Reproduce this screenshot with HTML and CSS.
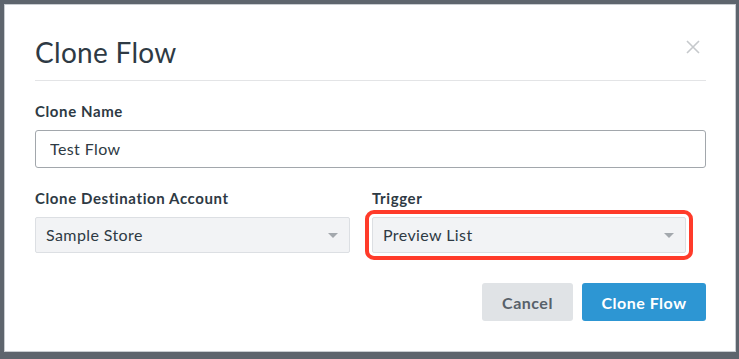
FILE: index.html
```html
<!DOCTYPE html>
<html lang="en">
<head>
    <meta charset="UTF-8">
    <meta name="viewport" content="width=device-width, initial-scale=1.0">
    <title>Clone Flow</title>
    <link rel="stylesheet" href="styles.css">
</head>
<body>

<div class="modal">
    <div class="modal-header">
        <h1>Clone Flow</h1>
        <button class="close-button" aria-label="Close">
            <svg width="14" height="14" viewBox="0 0 14 14">
                <path d="M1 1 L13 13 M13 1 L1 13" stroke="#c6c9cc" stroke-width="1.6" fill="none"/>
            </svg>
        </button>
    </div>

    <div class="input-group">
        <label for="clone_name">Clone Name</label>
        <input type="text" id="clone_name" name="clone_name" value="Test Flow">
    </div>

    <div class="row">
        <div class="input-group">
            <label for="account">Clone Destination Account</label>
            <div class="select-wrap">
                <select id="account" name="account">
                    <option>Sample Store</option>
                </select>
            </div>
        </div>
        <div class="input-group">
            <label for="trigger">Trigger</label>
            <div class="select-wrap highlight">
                <select id="trigger" name="trigger">
                    <option>Preview List</option>
                </select>
            </div>
        </div>
    </div>

    <div class="actions">
        <button class="cancel-button">Cancel</button>
        <button class="primary-button">Clone Flow</button>
    </div>
</div>

</body>
</html>
```

FILE: styles.css
```css
body {
    font-family: Lato, "Open Sans", sans-serif;
    margin: 0;
    padding: 4px;
    background-color: #5e656d;
    color: #2e3a44;
}
.modal {
    width: 730px;
    height: 346px;
    box-sizing: content-box;
    background-color: #fff;
    border: 1px solid #c9cdd1;
    padding: 0;
}
.modal-header {
    display: flex;
    justify-content: space-between;
    align-items: flex-start;
    margin: 0 29px 0 30px;
    padding-top: 30px;
    padding-bottom: 11px;
    border-bottom: 1px solid #e3e4e6;
}
.modal-header h1 {
    margin: 0;
    font-size: 28px;
    line-height: 34px;
    font-weight: 400;
    letter-spacing: 0.3px;
    color: #2e3a44;
}
.close-button {
    background: none;
    border: none;
    padding: 0;
    margin: 5px 6px 0 0;
    width: 14px;
    height: 14px;
    cursor: pointer;
}
.close-button svg {
    display: block;
}
.input-group {
    margin: 0 29px 0 30px;
}
.modal-header + .input-group {
    margin-top: 20px;
}
.input-group label {
    display: block;
    margin-bottom: 9px;
    font-size: 15px;
    line-height: 20px;
    font-weight: bold;
    letter-spacing: 0.6px;
    color: #2e3a44;
}
.input-group input {
    display: block;
    width: 100%;
    height: 38px;
    box-sizing: border-box;
    padding: 0 14px 2px;
    border: 1px solid #a2a7ac;
    border-radius: 3px;
    font-family: inherit;
    font-size: 16px;
    letter-spacing: 0.4px;
    color: #2e3a44;
}
.row {
    display: grid;
    grid-template-columns: 315px 314px;
    column-gap: 22px;
    margin: 20px 0 0 30px;
}
.row .input-group {
    margin: 0;
}
.row .input-group label {
    margin-bottom: 9px;
}
.select-wrap {
    position: relative;
    border-radius: 2px;
}
.select-wrap select {
    display: block;
    width: 100%;
    height: 36px;
    box-sizing: border-box;
    padding: 0 10px 2px;
    appearance: none;
    -webkit-appearance: none;
    background-color: #f2f3f5;
    border: 1px solid #dcdfe3;
    border-radius: 2px;
    font-family: inherit;
    font-size: 16px;
    letter-spacing: 0.4px;
    color: #2e3a44;
}
.select-wrap::after {
    content: "";
    position: absolute;
    right: 12px;
    top: 16px;
    border-left: 5px solid transparent;
    border-right: 5px solid transparent;
    border-top: 5px solid #a3a8ad;
}
.highlight {
    outline: 4px solid #ff3b2a;
    outline-offset: 3px;
}
.actions {
    display: flex;
    justify-content: flex-end;
    gap: 9px;
    margin: 30px 29px 0 0;
}
.actions button {
    height: 38px;
    border: none;
    border-radius: 3px;
    font-family: inherit;
    font-size: 16px;
    font-weight: bold;
    letter-spacing: 0.5px;
    cursor: pointer;
}
.cancel-button {
    width: 91px;
    background-color: #e0e3e6;
    color: #58616a;
}
.primary-button {
    width: 124px;
    background-color: #2d96d3;
    color: #fff;
}
```
